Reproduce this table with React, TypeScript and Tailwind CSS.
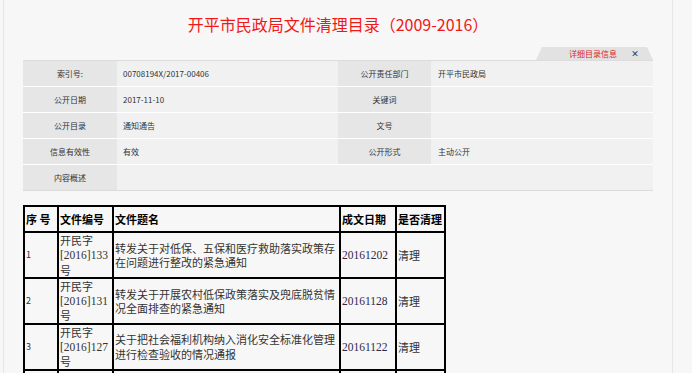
const info = [
  { l1: '索引号:', v1: '00708194X/2017-00406', l2: '公开责任部门', v2: '开平市民政局' },
  { l1: '公开日期', v1: '2017-11-10', l2: '关键词', v2: '' },
  { l1: '公开目录', v1: '通知通告', l2: '文号', v2: '' },
  { l1: '信息有效性', v1: '有效', l2: '公开形式', v2: '主动公开' },
];

const rows = [
  { no: '1', code: '133', title: '转发关于对低保、五保和医疗救助落实政策存在问题进行整改的紧急通知', date: '20161202' },
  { no: '2', code: '131', title: '转发关于开展农村低保政策落实及兜底脱贫情况全面排查的紧急通知', date: '20161128' },
  { no: '3', code: '127', title: '关于把社会福利机构纳入消化安全标准化管理进行检查验收的情况通报', date: '20161122' },
  { no: '4', code: '126', title: '关于做好2016年度民政统计年报工作的通知', date: '20161115' },
];

export default function App() {
  return (
    <div className="min-h-screen bg-[#f7f7f7] font-['Noto_Sans_CJK_SC',sans-serif]">
      <div className="ml-[3px] w-[670px] min-h-screen border-x border-[#e6e6e6] px-[19px]">
        <h1 className="pt-[12px] h-[36px] text-center text-[16px] leading-[24px] text-[#f21818] font-normal">
          开平市民政局文件清理目录（2009-2016）
        </h1>

        <div className="mt-[11px] flex justify-end">
          <div className="w-[117px] h-[13px] bg-[#e2e2e2] [clip-path:polygon(6px_0,111px_0,117px_100%,0_100%)] flex items-center text-[8px] leading-[13px]">
            <span className="ml-[33px] text-[#e0242b]">详细目录信息</span>
            <span className="ml-[14px] text-[#333] font-bold">×</span>
          </div>
        </div>

        <div className="border-t border-[#dcdcdc] border-b text-[8px] text-[#333]">
          {info.map((r) => (
            <div key={r.l1} className="grid grid-cols-[94px_221px_93px_222px] h-[26px] border-b border-white">
              <div className="bg-[#e6e6e6] flex items-center justify-center">{r.l1}</div>
              <div className="bg-[#f1f1f1] flex items-center pl-[6px]">{r.v1}</div>
              <div className="bg-[#e6e6e6] flex items-center justify-center">{r.l2}</div>
              <div className="bg-[#f1f1f1] flex items-center pl-[7px]">{r.v2}</div>
            </div>
          ))}
          <div className="grid grid-cols-[94px_536px] h-[25px]">
            <div className="bg-[#e6e6e6] flex items-center justify-center">内容概述</div>
            <div className="bg-[#f1f1f1]"></div>
          </div>
        </div>

        <table className="mt-[14px] w-[423px] table-fixed border-separate border-spacing-0 border border-black text-[11px] leading-[14.3px] text-[#333]">
          <thead>
            <tr className="h-[26px] font-bold text-black">
              <th className="w-[34px] border border-black text-left font-bold pl-px">序 号</th>
              <th className="w-[55px] border border-black text-left font-bold pl-px">文件编号</th>
              <th className="w-[227px] border border-black text-left font-bold pl-px">文件题名</th>
              <th className="w-[56px] border border-black text-left font-bold pl-px">成文日期</th>
              <th className="w-[49px] border border-black text-left font-bold pl-px">是否清理</th>
            </tr>
          </thead>
          <tbody>
            {rows.map((r) => (
              <tr key={r.no} className="h-[45px]">
                <td className="border border-black pl-px text-[9px]">{r.no}</td>
                <td className="border border-black pl-px">
                  开民字
                  <br />
                  <span className="font-['Liberation_Serif',serif] text-[11.5px]">[2016]{r.code}</span>
                  <br />
                  号
                </td>
                <td className="border border-black pl-px">{r.title}</td>
                <td className="border border-black pl-px font-['Liberation_Serif',serif] text-[11.5px] text-[#2a2a4a]">{r.date}</td>
                <td className="border border-black pl-px">清理</td>
              </tr>
            ))}
          </tbody>
        </table>
      </div>
    </div>
  );
}
